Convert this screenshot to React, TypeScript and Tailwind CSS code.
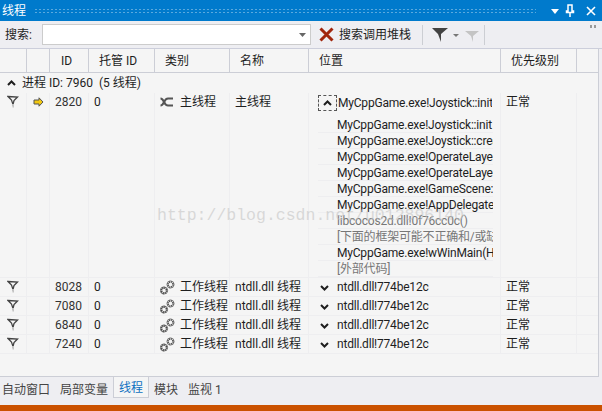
import React from "react";

const font = "font-['Roboto','Noto_Sans_CJK_SC',sans-serif]";

const cols = "grid grid-cols-[27px_23px_39px_66px_75px_79px_192px_76px]";

const stackLines = [
  { text: "MyCppGame.exe!Joystick::init", dim: false },
  { text: "MyCppGame.exe!Joystick::create", dim: false },
  { text: "MyCppGame.exe!OperateLayer::init", dim: false },
  { text: "MyCppGame.exe!OperateLayer::create", dim: false },
  { text: "MyCppGame.exe!GameScene::init", dim: false },
  { text: "MyCppGame.exe!AppDelegate::run", dim: false },
  { text: "libcocos2d.dll!0f76cc0c()", dim: true },
  { text: "[下面的框架可能不正确和/或缺失]", dim: true },
  { text: "MyCppGame.exe!wWinMain(HINSTANCE", dim: false },
  { text: "[外部代码]", dim: true },
];

const workers = ["8028", "7080", "6840", "7240"];

const Flag = () => (
  <svg width="12" height="14" viewBox="0 0 12 14" className="block">
    <path d="M1 1.500l9.500 0.500L7 5.500l-1 4L4.500 5z" fill="#f5f5f5" stroke="#444" strokeWidth="1.300" />
    <path d="M5 9h2v3.500H5.500z" fill="#c4c4c4" />
  </svg>
);

const Chevron = ({ up }: { up?: boolean }) => (
  <svg width="9" height="6" viewBox="0 0 9 6" className="block">
    <path d={up ? "M1 5l3.500-3.500L8 5" : "M1 1l3.500 3.500L8 1"} fill="none" stroke="#1e1e1e" strokeWidth="2" />
  </svg>
);

const Gears = () => (
  <svg width="15" height="15" viewBox="0 0 15 15" className="block">
    <circle cx="10.500" cy="4.500" r="2.700" fill="none" stroke="#555" strokeWidth="2" strokeDasharray="1.400 0.700" />
    <circle cx="10.500" cy="4.500" r="3.600" fill="none" stroke="#777" strokeWidth="0.800" />
    <circle cx="4" cy="10.500" r="2.700" fill="none" stroke="#444" strokeWidth="2" strokeDasharray="1.400 0.700" />
    <circle cx="4" cy="10.500" r="3.600" fill="none" stroke="#666" strokeWidth="0.800" />
  </svg>
);

const MainIcon = () => (
  <svg width="15" height="10" viewBox="0 0 15 10" className="block">
    <path d="M0.500 1.500c4 0 3 7 7.500 7h5M0.500 8.500c4 0 3-7 7.500-7h5" fill="none" stroke="#555" strokeWidth="2.200" />
  </svg>
);

const Row = ({ id }: { id: string }) => (
  <div className={`${cols} h-[19px] border-b border-[#eeeef0] text-[12px] leading-[19px] text-[#1e1e1e]`}>
    <div className="flex justify-center pt-[2px] border-r border-[#eeeef0]"><Flag /></div>
    <div className="border-r border-[#eeeef0]" />
    <div className="pl-[5px] border-r border-[#eeeef0] text-[#333]">{id}</div>
    <div className="pl-[5px] border-r border-[#eeeef0]">0</div>
    <div className="flex items-center gap-[5px] pl-[5px] border-r border-[#eeeef0] whitespace-nowrap">
      <Gears />
      <span>工作线程</span>
    </div>
    <div className="pl-[5px] border-r border-[#eeeef0] whitespace-nowrap overflow-hidden">ntdll.dll 线程</div>
    <div className="flex items-center gap-[8px] pl-[11px] border-r border-[#eeeef0]">
      <Chevron />
      <span className="tracking-[-0.2px]">ntdll.dll!774be12c</span>
    </div>
    <div className="pl-[5px] border-r border-[#eeeef0]">正常</div>
  </div>
);

export default function App() {
  return (
    <div className={`${font} w-[602px] h-[411px] flex flex-col bg-[#eeeef2] overflow-hidden relative`}>
      {/* title bar */}
      <div className="h-[21px] bg-[#007acc] flex items-center pl-[2px] pr-[5px] text-white gap-[8px] shrink-0">
        <span className="text-[12px] leading-none">线程</span>
        <div className="flex-1 h-[6px] bg-[radial-gradient(#5aa9de_1px,transparent_1px)] bg-[length:4px_3px]" />
        <div className="flex items-center gap-[5px] pl-[6px]">
          <svg width="10" height="10" viewBox="0 0 10 10"><path d="M1 3h8L5 8z" fill="#fff" /></svg>
          <svg width="10" height="14" viewBox="0 0 10 14"><path d="M3 1h4v6h1.500v1.500h-7V7H3zM5 8.500V13" fill="none" stroke="#fff" strokeWidth="1.500" /></svg>
          <svg width="12" height="12" viewBox="0 0 12 12" className="ml-[5px]"><path d="M2 2l8 8M10 2l-8 8" stroke="#fff" strokeWidth="1.600" /></svg>
        </div>
      </div>

      {/* toolbar */}
      <div className="h-[28px] flex items-center pl-[5px] text-[12px] text-[#1e1e1e] shrink-0 border-b border-[#cccedb]">
        <span className="w-[37px]">搜索:</span>
        <div className="w-[269px] h-[21px] bg-white border border-[#ccc] flex items-center justify-end pr-[4px]">
          <svg width="7" height="4" viewBox="0 0 7 4"><path d="M0 0h7L3.500 4z" fill="#666" /></svg>
        </div>
        <svg width="15" height="15" viewBox="0 0 15 15" className="ml-[8px]"><path d="M1.500 1.500l12 12M13.500 1.500l-12 12" stroke="#a1260d" strokeWidth="3" /></svg>
        <span className="ml-[5px]">搜索调用堆栈</span>
        <div className="w-px h-[20px] bg-[#ccced3] ml-[11px]" />
        <svg width="16" height="16" viewBox="0 0 16 16" className="ml-[9px]"><path d="M0 1h16L9 7v8L6 7z" fill="#424242" /></svg>
        <svg width="6" height="3" viewBox="0 0 6 3" className="ml-[5px] mt-[2px]"><path d="M0 0h6L3 3z" fill="#777" /></svg>
        <svg width="14" height="14" viewBox="0 0 14 14" className="ml-[6px]"><path d="M0 3h14L8 8v6L6 8z" fill="#c4c4c4" /></svg>
        <div className="w-px h-[20px] bg-[#ccced3] ml-[5px]" />
        <div className="ml-auto mr-[6px] mb-[16px] flex gap-[2px]">
          <span className="w-[2px] h-[3px] bg-[#999]" />
          <span className="w-[2px] h-[3px] bg-[#999]" />
        </div>
      </div>

      {/* table */}
      <div className="relative flex-1 bg-[#f5f5f5] border-r border-b border-[#ccced6] w-[599px] flex flex-col">
        <div className={`${cols} h-[24px] border-b border-[#ccced6] text-[12px] leading-[24px] text-[#1e1e1e]`}>
          <div className="border-r border-[#ccced6]" />
          <div className="border-r border-[#ccced6]" />
          <div className="pl-[11px] border-r border-[#ccced6]">ID</div>
          <div className="pl-[10px] border-r border-[#ccced6]">托管 ID</div>
          <div className="pl-[10px] border-r border-[#ccced6]">类别</div>
          <div className="pl-[10px] border-r border-[#ccced6]">名称</div>
          <div className="pl-[10px] border-r border-[#ccced6]">位置</div>
          <div className="pl-[10px] border-r border-[#ccced6]">优先级别</div>
        </div>

        <div className="h-[20px] flex items-center gap-[6px] pl-[7px] text-[12px] text-[#1e1e1e]">
          <Chevron up />
          <span>进程 ID: 7960&nbsp; (5 线程)</span>
        </div>

        <div className={`${cols} h-[185px] border-b border-[#eeeef0] text-[12px] leading-[18px] text-[#1e1e1e]`}>
          <div className="flex justify-center pt-[2px] border-r border-[#eeeef0]"><Flag /></div>
          <div className="flex justify-center pt-[4px] border-r border-[#eeeef0]">
            <svg width="11" height="10" viewBox="0 0 11 10" className="block"><path d="M1 3h5V0.800L10 5 6 9.200V7H1z" fill="#f2c811" stroke="#555" strokeWidth="1" /></svg>
          </div>
          <div className="pl-[5px] border-r border-[#eeeef0] text-[#333]">2820</div>
          <div className="pl-[5px] border-r border-[#eeeef0]">0</div>
          <div className="flex items-start gap-[5px] pl-[5px] border-r border-[#eeeef0]">
            <div className="pt-[4px]"><MainIcon /></div>
            <span>主线程</span>
          </div>
          <div className="pl-[5px] border-r border-[#eeeef0]">主线程</div>
          <div className="border-r border-[#eeeef0] pl-[9px] pt-[2px] min-w-0">
            <div className="flex items-center gap-[1px] h-[16px]">
              <div className="w-[19px] h-[16px] border border-dashed border-[#555] flex items-center justify-center shrink-0"><Chevron up /></div>
              <span className="w-[154px] overflow-hidden whitespace-nowrap tracking-[-0.2px]">MyCppGame.exe!Joystick::init</span>
            </div>
            <div className="mt-[6px] w-[175px] text-[#1e1e1e] tracking-[-0.2px]">
              {stackLines.map((line) => (
                <div
                  key={line.text}
                  className={`h-[16px] pl-[19px] leading-[16px] border-b border-[#eeeef0] overflow-hidden whitespace-nowrap ${line.dim ? "text-[#777]" : ""}`}
                >
                  {line.text}
                </div>
              ))}
            </div>
          </div>
          <div className="pl-[5px] border-r border-[#eeeef0]">正常</div>
        </div>

        {workers.map((id) => (
          <Row key={id} id={id} />
        ))}

        {/* watermark */}
        <div className="absolute left-[157px] top-[159px] font-['Liberation_Mono',monospace] text-[16.500px] leading-none whitespace-nowrap text-[#c4c4c4]/60 pointer-events-none">
          http://blog.csdn.net/u012896140
        </div>
      </div>

      {/* tabs */}
      <div className="h-[28px] flex items-start text-[12px] text-[#444] shrink-0 pl-[2px]">
        <span className="mt-[4px]">自动窗口</span>
        <span className="mt-[4px] ml-[10px]">局部变量</span>
        <span className="ml-[5px] mt-[-1px] h-[22px] px-[5px] bg-[#f5f5f5] border border-t-0 border-[#ccced6] text-[#0e70c0] leading-[24px]">线程</span>
        <span className="mt-[4px] ml-[5px]">模块</span>
        <span className="mt-[4px] ml-[10px]">监视 1</span>
      </div>

      <div className="h-[6px] bg-[#ca5100] shrink-0" />
    </div>
  );
}
